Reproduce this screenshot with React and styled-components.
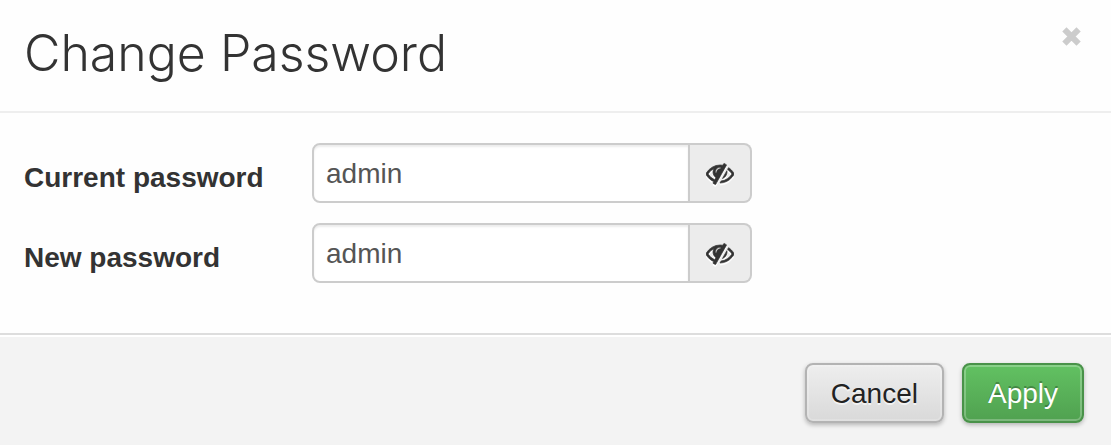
import React from 'react';
import styled, { createGlobalStyle, css } from 'styled-components';

const GlobalStyle = createGlobalStyle`
  * { box-sizing: border-box; }
  body {
    margin: 0;
    background: #fefefe;
    color: #333;
    font-family: "Liberation Sans", Arial, sans-serif;
    font-size: 28px;
  }
`;

const Header = styled.header`
  display: flex;
  justify-content: space-between;
  align-items: flex-start;
  padding: 23px 30px 28px 24px;
  border-bottom: 2px solid #eee;
`;

const Title = styled.h1`
  margin: 0;
  font-family: Inter, "Liberation Sans", sans-serif;
  font-size: 50px;
  font-weight: 300;
  line-height: 60px;
`;

const CloseButton = styled.button`
  display: flex;
  margin: 4px 0 0;
  padding: 0;
  border: 0;
  background: none;
  color: #ccc;
  cursor: pointer;
`;

const Fields = styled.div`
  display: flex;
  flex-direction: column;
  gap: 20px;
  padding: 30px 24px 50px;
`;

const FieldRow = styled.div`
  display: flex;
`;

const Label = styled.label`
  flex: 0 0 288px;
  padding-top: 10px;
  font-weight: 700;
  line-height: 50px;
`;

const InputGroup = styled.div`
  display: flex;
  flex: 0 1 440px;
  min-width: 0;
  height: 60px;
`;

const Input = styled.input`
  flex: 1;
  min-width: 0;
  padding: 2px 12px 0;
  border: 2px solid #ccc;
  border-radius: 8px 0 0 8px;
  background: #fff;
  box-shadow: inset 0 2px 2px rgba(0, 0, 0, 0.075);
  color: #555;
  font: inherit;
`;

const RevealButton = styled.button`
  display: flex;
  flex: 0 0 62px;
  align-items: center;
  justify-content: center;
  padding: 0;
  border: 2px solid #ccc;
  border-left: 0;
  border-radius: 0 8px 8px 0;
  background: #ececec;
  color: #333;
  cursor: pointer;

  svg { filter: drop-shadow(0 2px 0 #fff); }
`;

const Footer = styled.footer`
  display: flex;
  justify-content: flex-end;
  gap: 18px;
  padding: 28px 27px 22px;
  border-top: 2px solid #ddd;
  background: #f3f3f3;
  box-shadow: inset 0 2px 0 #fff;
`;

const Button = styled.button`
  height: 60px;
  padding: 2px 24px 0;
  border: 2px solid #b3b3b3;
  border-radius: 8px;
  background: linear-gradient(#eee, #d9d9d9);
  box-shadow: inset 0 0 0 2px rgba(255, 255, 255, 0.2), 0 2px 4px rgba(0, 0, 0, 0.25);
  color: #222;
  font: inherit;
  text-shadow: 0 2px 0 rgba(255, 255, 255, 0.6);
  cursor: pointer;

  ${({ $primary }) => $primary && css`
    border-color: #499249;
    background: linear-gradient(#62c162, #50a150);
    box-shadow: inset 0 0 0 2px rgba(255, 255, 255, 0.25), 0 2px 4px rgba(0, 0, 0, 0.25);
    color: #fff;
    text-shadow: 0 -2px 0 rgba(0, 0, 0, 0.25);
  `}
`;

const CloseIcon = () => (
  <svg width="19" height="19" viewBox="0 0 19 19" aria-hidden="true">
    <path d="M2.4 2.4L16.6 16.6M16.6 2.4L2.4 16.6" stroke="currentColor" strokeWidth="6" />
  </svg>
);

const EyeSlashIcon = () => (
  <svg
    width="28"
    height="28"
    viewBox="0 0 1792 1792"
    fill="currentColor"
    stroke="currentColor"
    strokeWidth="44"
    aria-hidden="true"
  >
    <path d="M555 1335l78-141q-87-63-136-159t-49-203q0-121 61-225-229 117-381 353 167 258 427 375zm389-759q0-20-14-34t-34-14q-125 0-214.500 89.500t-89.500 214.500q0 20 14 34t34 14 34-14 14-34q0-86 61-147t147-61q20 0 34-14t14-34zm363-191q0 7-1 9-106 189-316 567t-315 566l-49 89q-10 16-28 16-12 0-134-70-16-10-16-28 0-12 44-87-143-65-263.500-173t-208.500-245q-20-31-20-69t20-69q153-235 380-371t496-136q89 0 180 17l54-97q10-16 28-16 5 0 18 6t31 15.500 33 18.500 31.500 18.500 19.500 11.500q16 10 16 27zm37 447q0 139-79 253.500t-209 164.500l280-502q8 45 8 84zm448 128q0 35-20 69-39 64-109 145-150 172-347.500 267t-419.500 95l74-132q212-18 392.500-137t301.500-307q-115-179-282-294l63-112q95 64 182.500 153t144.500 184q20 34 20 69z" />
  </svg>
);

function PasswordField({ id, label }) {
  const [visible, setVisible] = React.useState(true);
  return (
    <FieldRow>
      <Label htmlFor={id}>{label}</Label>
      <InputGroup>
        <Input id={id} type={visible ? 'text' : 'password'} defaultValue="admin" />
        <RevealButton
          type="button"
          aria-label="Toggle visibility"
          onClick={() => setVisible(!visible)}
        >
          <EyeSlashIcon />
        </RevealButton>
      </InputGroup>
    </FieldRow>
  );
}

export default function App() {
  return (
    <form onSubmit={(e) => e.preventDefault()}>
      <GlobalStyle />
      <Header>
        <Title>Change Password</Title>
        <CloseButton type="button" aria-label="Close"><CloseIcon /></CloseButton>
      </Header>
      <Fields>
        <PasswordField id="current" label="Current password" />
        <PasswordField id="new" label="New password" />
      </Fields>
      <Footer>
        <Button type="button">Cancel</Button>
        <Button type="submit" $primary>Apply</Button>
      </Footer>
    </form>
  );
}
